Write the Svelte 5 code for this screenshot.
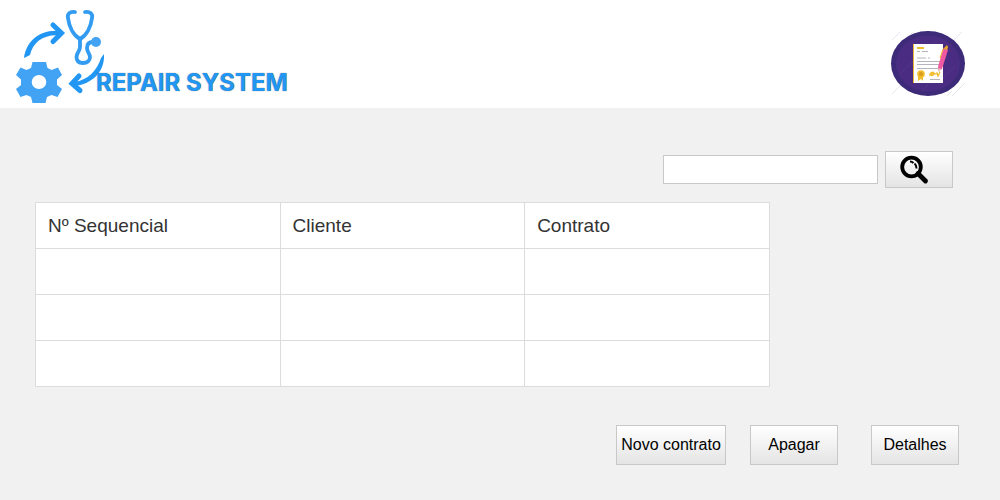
<script>
  const columns = ['Nº Sequencial', 'Cliente', 'Contrato'];
  const rows = [
    ['', '', ''],
    ['', '', ''],
    ['', '', '']
  ];
  let query = $state('');
</script>

<div class="page">
  <header>
    <div class="brand">
      <svg class="mark" width="104" height="108" viewBox="0 0 104 108" fill="none" aria-hidden="true">
        <g fill="#42a3f4">
          <path fill-rule="evenodd" d="M32.500 62H46l1.500 6 4 2 6.500-2.500L62 75l-5 4.500v5.500l5 4-4.500 8-6-2-4.500 2-1.500 6H32.500L31 97l-4.500-2-6 2L16 89l5-4v-5.500L16 75l4.500-7.500 6 2.500 4.500-2ZM39 75a7.300 7 0 1 0 0 14a7.300 7 0 1 0 0-14Z"/>
        </g>
        <g stroke="#329bf2" stroke-width="3.800" stroke-linecap="round" stroke-linejoin="round">
          <path d="M75 12C70 11 67 14 68 18C69 26 73 35 80 39C87 35 91 26 92 18C93 14 90 11 85 12"/>
          <path d="M80 39V47C80 51 76.500 53 76.500 57C76.500 61 79 63 83 63C87 63 90 61 90 57C90 54 87 52 87 48C87 44 89 42 93 42"/>
        </g>
        <circle cx="96" cy="42" r="5" fill="#42a3f4"/>
        <g fill="#2196f3">
          <path d="M24 58C26 42 39 29 60 31V35.500C44 34 33 42 30 55Z"/>
          <path d="M104 54C105 70 94 84 74 86V82C89 80 97 70 101 58Z"/>
        </g>
        <g stroke="#2196f3" stroke-width="5" stroke-linecap="round" stroke-linejoin="miter">
          <path d="M53 25L61.500 33L53 41.500"/>
          <path d="M79 76L72 83.500L80 90.500"/>
        </g>
      </svg>
      <span class="wordmark">REPAIR SYSTEM</span>
    </div>

    <svg class="badge" width="76" height="68" viewBox="0 0 76 68" aria-hidden="true">
      <g stroke="#e8e5ed" stroke-width="1">
        <path d="M2 10L10 2M2 64L16 50M60 14L72 2M62 66L75 53M23 2L18 7M57 66L62 61"/>
      </g>
      <ellipse cx="38" cy="33.500" rx="37" ry="32.500" fill="#3d2a78"/>
      <ellipse cx="38" cy="33.500" rx="32" ry="28" fill="#4a2d83"/>
      <path d="M10 44L25 29M52 49L65 36M32 61L38 55M47 10L42 15" stroke="#4f3587"/>
      <path d="M23 14H53V53H23Z" fill="#fff"/>
      <path d="M23.500 14V53" stroke="#edb936"/>
      <path d="M27 18H34" stroke="#f2bd2c" stroke-width="2"/>
      <path d="M27 21.500H30M32 21.500H38M27 28H36M38 28H40M27 31.500H50M27 34.500H50M27 38.500H49M40 49.500H50" stroke="#b5b4bc"/>
      <path d="M28 46V51L31 49L33 51V46Z" fill="#f2bd2c"/>
      <circle cx="31" cy="44" r="3.800" fill="#f2bd2c"/>
      <circle cx="31" cy="44" r="2" fill="#d99b21"/>
      <path d="M40 46C39 42 45 41 44 44C43 46 40 46 42 44C44 41 45 46 47 43L48 46L50 42" fill="none" stroke="#f2bd2c" stroke-width="1.300"/>
      <path d="M53 19L57 15L58 17L57 21Z" fill="#e7a72b"/>
      <path d="M53 19L58 20L52 39L48.500 41L48 37Z" fill="#f0599f"/>
      <path d="M53 19L50 28" stroke="#f2bd2c"/>
      <path d="M48.500 38L49 43L51 39Z" fill="#e4d0b8"/>
    </svg>
  </header>

  <main>
    <form class="search" onsubmit={(e) => e.preventDefault()}>
      <input type="search" aria-label="Pesquisar contrato" bind:value={query} />
      <button class="find" type="submit" aria-label="Pesquisar">
        <svg width="30" height="30" viewBox="0 0 30 30" fill="none" stroke="#000" aria-hidden="true">
          <circle cx="12.500" cy="12" r="9.300" stroke-width="3.800"/>
          <path d="M19 18.500L26.500 26" stroke-width="4.800" stroke-linecap="round"/>
          <path d="M11 6.500Q13 6.500 14.500 8M15.500 8.500Q17.500 10 17.500 13.500" stroke-width="2"/>
        </svg>
      </button>
    </form>

    <table>
      <thead>
        <tr>
          {#each columns as column}
            <th scope="col">{column}</th>
          {/each}
        </tr>
      </thead>
      <tbody>
        {#each rows as row}
          <tr>
            {#each row as cell}
              <td>{cell}</td>
            {/each}
          </tr>
        {/each}
      </tbody>
    </table>

    <div class="actions">
      <button class="new" type="button">Novo contrato</button>
      <button class="remove" type="button">Apagar</button>
      <button type="button">Detalhes</button>
    </div>
  </main>
</div>

<style>
  :global(body) {
    margin: 0;
    background: #f1f1f1;
  }
  .page {
    font-family: "Liberation Sans", Arial, sans-serif;
    color: #333;
  }
  header {
    display: flex;
    align-items: center;
    justify-content: space-between;
    padding-right: 34px;
    background: #fff;
  }
  .brand {
    display: flex;
    align-items: flex-end;
  }
  .mark,
  .badge {
    display: block;
    flex: none;
  }
  .badge {
    margin-top: 20px;
  }
  .wordmark {
    margin-left: -8px;
    padding-bottom: 12px;
    font-family: Inter, sans-serif;
    font-size: 24px;
    font-weight: 700;
    line-height: 26px;
    white-space: nowrap;
    color: #2196f3;
    text-shadow: 0 0 1px #555;
  }
  main {
    padding: 43px 35px 35px;
  }
  .search {
    display: flex;
    align-items: center;
    justify-content: flex-end;
    gap: 7px;
    padding-right: 12px;
  }
  input {
    box-sizing: border-box;
    width: 215px;
    height: 29px;
    padding: 4px 8px;
    border: 1px solid #c8c8c8;
    border-radius: 0;
    background: #fff;
    font: inherit;
    appearance: none;
  }
  button {
    box-sizing: border-box;
    width: 88px;
    height: 40px;
    padding: 0;
    border: 1px solid #c8c8c8;
    background: linear-gradient(#fff, #e4e4e4);
    color: #000;
    font-family: inherit;
    font-size: 16px;
    white-space: nowrap;
  }
  .find {
    display: flex;
    align-items: center;
    width: 68px;
    height: 37px;
    padding-left: 13px;
  }
  table {
    width: 79%;
    margin-top: 14px;
    border-collapse: collapse;
    table-layout: fixed;
    background: #fff;
  }
  th,
  td {
    box-sizing: border-box;
    height: 46px;
    padding: 0 12px;
    border: 1px solid #dcdcdc;
    font-size: 19px;
    font-weight: 400;
    text-align: left;
  }
  .actions {
    display: flex;
    justify-content: flex-end;
    margin-top: 38px;
    padding-right: 6px;
  }
  .new {
    width: 110px;
    margin-right: 24px;
  }
  .remove {
    margin-right: 33px;
  }
</style>
